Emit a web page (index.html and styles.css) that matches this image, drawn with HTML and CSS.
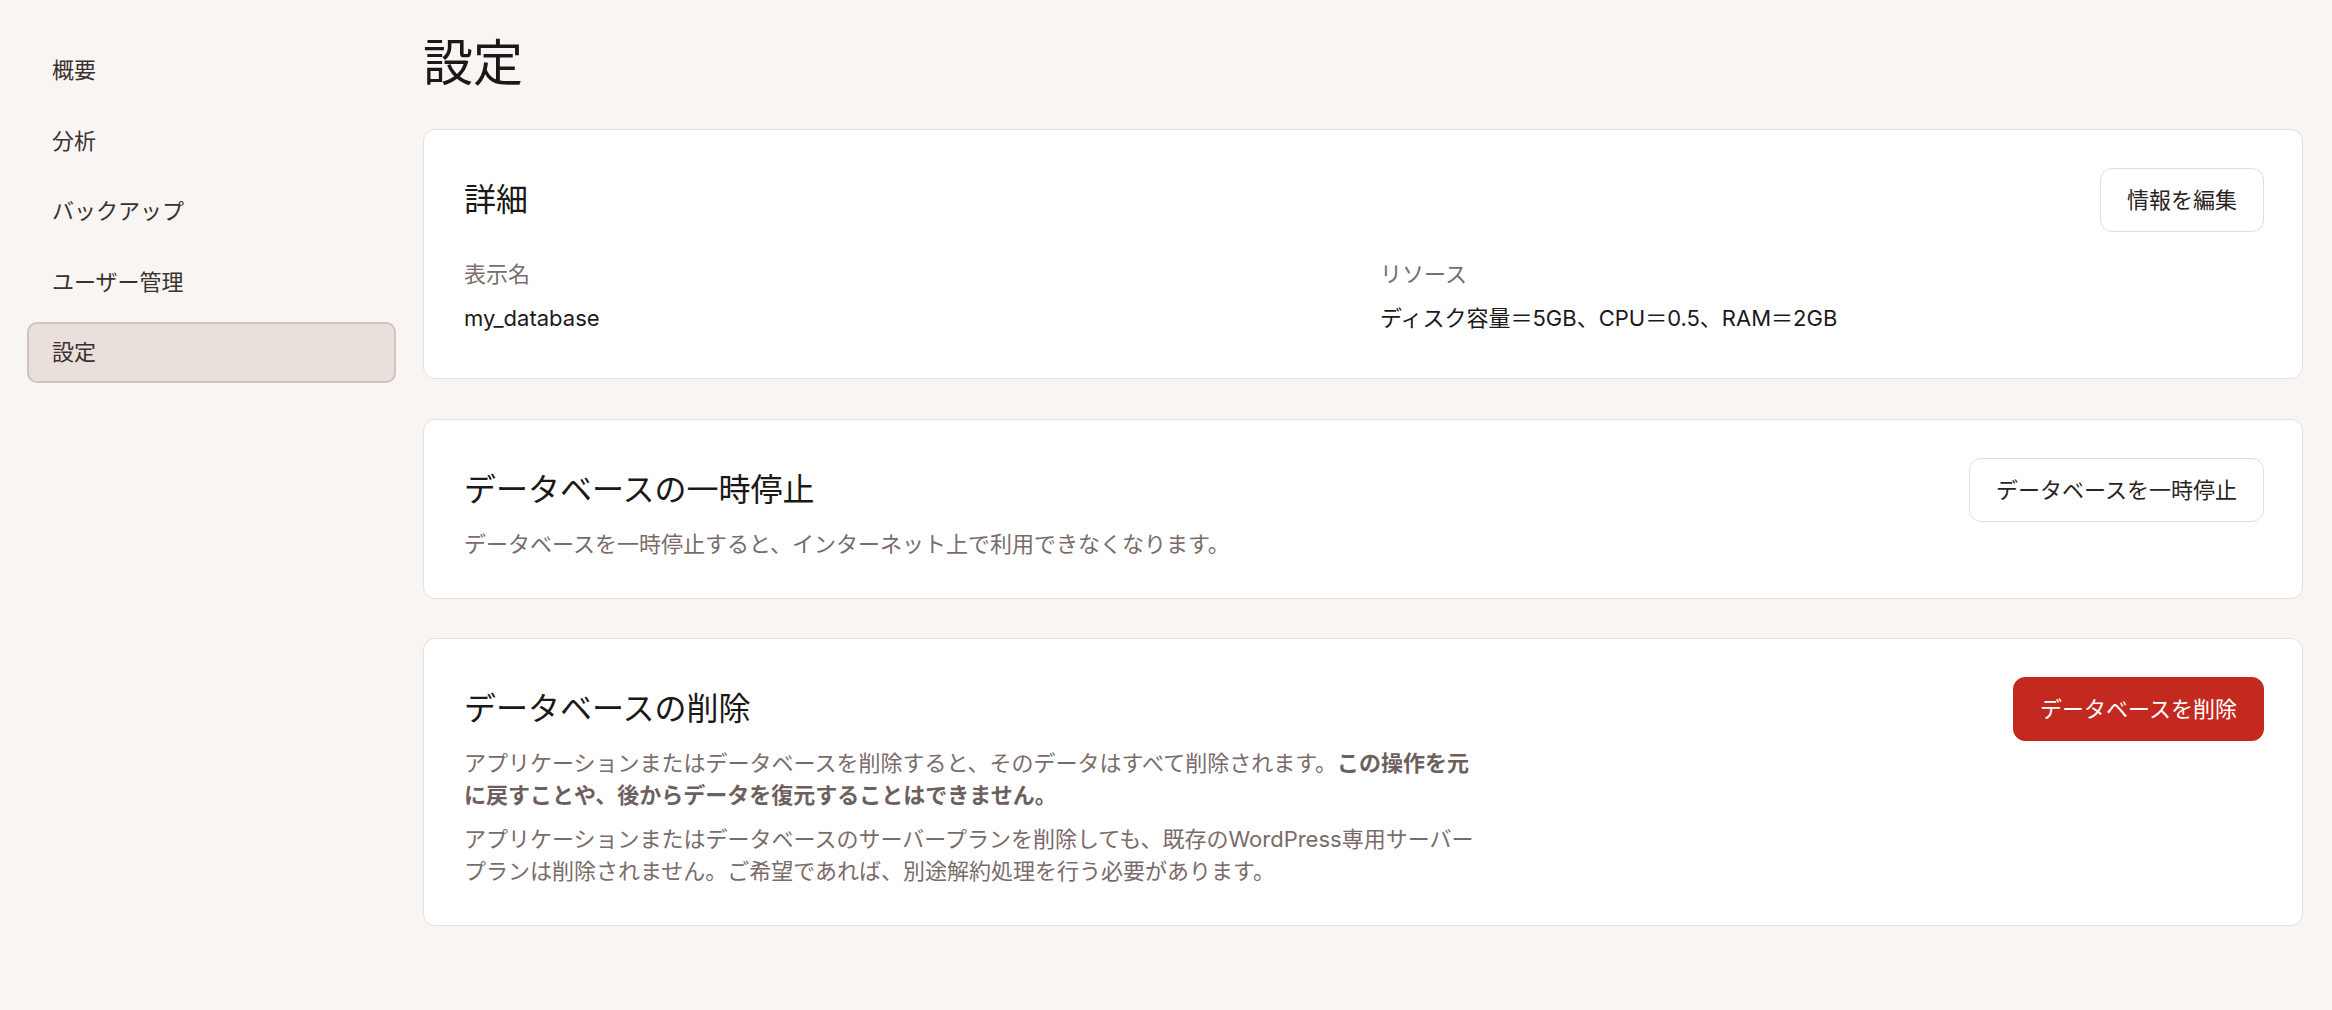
FILE: index.html
```html
<!DOCTYPE html>
<html lang="ja">
<head>
<meta charset="utf-8">
<title>設定</title>
<link rel="stylesheet" href="styles.css">
</head>
<body>
<div class="layout">
  <nav class="sidebar">
    <a class="nav-item">概要</a>
    <a class="nav-item">分析</a>
    <a class="nav-item">バックアップ</a>
    <a class="nav-item">ユーザー管理</a>
    <a class="nav-item active">設定</a>
  </nav>
  <main class="main">
    <h1 class="page-title">設定</h1>
    <div class="cards">
      <section class="card card-details">
        <div class="card-header">
          <h2 class="card-title">詳細</h2>
          <button class="btn">情報を編集</button>
        </div>
        <div class="details-grid">
          <div class="field">
            <div class="field-label">表示名</div>
            <div class="field-value">my_database</div>
          </div>
          <div class="field">
            <div class="field-label">リソース</div>
            <div class="field-value">ディスク容量＝5GB、CPU＝0.5、RAM＝2GB</div>
          </div>
        </div>
      </section>

      <section class="card card-row">
        <div class="card-body">
          <h2 class="card-title">データベースの一時停止</h2>
          <p class="desc">データベースを一時停止すると、インターネット上で利用できなくなります。</p>
        </div>
        <button class="btn">データベースを一時停止</button>
      </section>

      <section class="card card-row">
        <div class="card-body">
          <h2 class="card-title">データベースの削除</h2>
          <p class="desc">アプリケーションまたはデータベースを削除すると、そのデータはすべて削除されます。<strong>この操作を元に戻すことや、後からデータを復元することはできません。</strong></p>
          <p class="desc desc-gap">アプリケーションまたはデータベースのサーバープランを削除しても、既存のWordPress専用サーバープランは削除されません。ご希望であれば、別途解約処理を行う必要があります。</p>
        </div>
        <button class="btn btn-danger">データベースを削除</button>
      </section>
    </div>
  </main>
</div>
</body>
</html>
```

FILE: styles.css
```css
* {
  box-sizing: border-box;
}

html, body {
  margin: 0;
  padding: 0;
}

body {
  background: #f8f5f3;
  font-family: Inter, "Noto Sans CJK JP", sans-serif;
  color: #1c1919;
  width: 2332px;
  min-height: 1010px;
}

.layout {
  display: flex;
  gap: 27px;
  padding: 0 29px 0 27px;
}

.sidebar {
  width: 369px;
  flex: none;
  display: flex;
  flex-direction: column;
  gap: 9.6px;
  padding-top: 39.5px;
}

.nav-item {
  height: 61px;
  display: flex;
  align-items: center;
  padding-left: 23px;
  border: 2px solid transparent;
  border-radius: 10px;
  font-size: 22px;
  line-height: 1;
  color: #3a3131;
}

.nav-item.active {
  background: #e9dfdb;
  border-color: #cfc4c1;
}

.main {
  flex: 1;
  min-width: 0;
  padding-top: 33px;
}

.page-title {
  margin: 0 0 36px;
  font-size: 50px;
  line-height: 60px;
  font-weight: 400;
  color: #1b1818;
}

.cards {
  display: flex;
  flex-direction: column;
  gap: 39.5px;
}

.card {
  background: #ffffff;
  border: 1px solid #e8e0dc;
  border-radius: 12px;
  padding: 38px 38px 38px 40px;
}

.card-details {
  padding-bottom: 43.5px;
}

.card-header {
  display: flex;
  align-items: center;
  justify-content: space-between;
}

.card-title {
  margin: 0;
  font-size: 32px;
  line-height: 60px;
  padding: 2px 0;
  font-weight: 400;
  color: #1b1818;
}

.details-grid {
  display: grid;
  grid-template-columns: 1fr 1fr;
  column-gap: 32px;
  margin-top: 25.5px;
}

.field-label {
  font-size: 22px;
  line-height: 33px;
  color: #7b6d6d;
}

.field-value {
  margin-top: 11px;
  font-size: 22px;
  line-height: 33px;
  color: #1c1919;
}

.card-row {
  display: flex;
  align-items: flex-start;
  justify-content: space-between;
}

.card-body {
  flex: 1;
  min-width: 0;
}

.desc {
  margin: 6px 0 0;
  max-width: 1020px;
  font-size: 22px;
  line-height: 32px;
  color: #7a6b6b;
}

.desc strong {
  font-weight: 700;
  color: #6e5f5f;
}

.desc-gap {
  margin-top: 12px;
}

.btn {
  flex: none;
  height: 64px;
  padding: 0 26px;
  border: 1px solid #e6ddd9;
  border-radius: 12px;
  background: #ffffff;
  font-family: Inter, "Noto Sans CJK JP", sans-serif;
  font-size: 22px;
  line-height: 1;
  color: #2a2323;
  cursor: pointer;
}

.btn-danger {
  background: #c4291f;
  border-color: #c4291f;
  color: #ffffff;
}
```
